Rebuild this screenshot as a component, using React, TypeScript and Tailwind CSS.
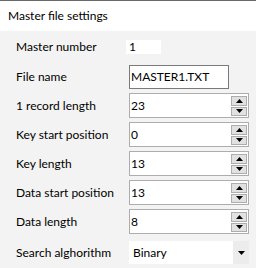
import React from 'react';

const spinRows = [
  { label: '1 record length', value: '23' },
  { label: 'Key start position', value: '0' },
  { label: 'Key length', value: '13' },
  { label: 'Data start position', value: '13' },
  { label: 'Data length', value: '8' },
];

function Arrow({ up }: { up?: boolean }) {
  return (
    <svg width="7" height="4" viewBox="0 0 7 4">
      <polygon points={up ? '3.5,0 7,4 0,4' : '0,0 7,0 3.5,4'} fill="#000" />
    </svg>
  );
}

function SpinBox({ value }: { value: string }) {
  return (
    <div className="w-[120px] h-[25px] bg-white border border-[#adadad] flex items-center justify-between pl-[1px] pr-[1px]">
      <span>{value}</span>
      <div className="flex flex-col gap-[1px]">
        <div className="w-[16px] h-[10px] bg-[#e1e1e1] border border-[#adadad] flex items-center justify-center">
          <Arrow up />
        </div>
        <div className="w-[16px] h-[9px] bg-[#e1e1e1] border border-[#adadad] flex items-center justify-center">
          <Arrow />
        </div>
      </div>
    </div>
  );
}

export default function App() {
  return (
    <div
      className="w-[256px] h-[268px] bg-[#f3f3f3] text-[12px] text-black overflow-hidden"
      style={{ fontFamily: 'Lato, "Noto Sans", sans-serif' }}
    >
      {/* Header */}
      <div className="border-t border-[#696969] bg-white h-[31px] flex items-center pl-[8px]">
        Master file settings
      </div>

      <div className="pl-[16px] pt-[9px] flex flex-col">
        <div className="flex items-center h-[14px]">
          <span className="w-[110px]">Master number</span>
          <div className="w-[35px] h-[14px] bg-white pl-[3px] flex items-center">1</div>
        </div>

        <div className="flex items-center mt-[11px]">
          <span className="w-[113px]">File name</span>
          <div className="w-[100px] h-[24px] bg-white border border-[#7a7a7a] flex items-center pl-[1px]">
            MASTER1.TXT
          </div>
        </div>

        <div className="flex flex-col gap-[4px] mt-[4px]">
          {spinRows.map((r) => (
            <div key={r.label} className="flex items-center">
              <span className="w-[113px]">{r.label}</span>
              <SpinBox value={r.value} />
            </div>
          ))}
        </div>

        <div className="flex items-center mt-[7px]">
          <span className="w-[113px]">Search alghorithm</span>
          <div className="w-[120px] h-[23px] bg-white flex items-center justify-between">
            <span className="pl-[4px]">Binary</span>
            <div className="w-[16px] h-[23px] bg-[#ececec] flex items-center justify-center">
              <Arrow />
            </div>
          </div>
        </div>
      </div>
    </div>
  );
}
